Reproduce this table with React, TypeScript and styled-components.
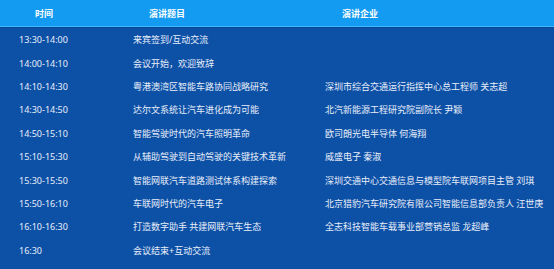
import React from 'react';
import styled, { createGlobalStyle } from 'styled-components';

const GlobalStyle = createGlobalStyle`
  html, body {
    margin: 0;
    padding: 0;
    background: #0d51a7;
  }
  body {
    font-family: "Noto Sans", "Noto Sans CJK SC", sans-serif;
  }
`;

const Schedule = styled.div`
  width: 554px;
  height: 269px;
  background: #0d51a7;
  overflow: hidden;
`;

const HeaderRow = styled.div`
  display: flex;
  height: 26px;
  background: #129bf0;
  border-bottom: 1px solid #3bb8ff;
  box-shadow: 0 1px 0 #0b4894;
`;

const HeadCell = styled.div<{ $width: number }>`
  width: ${props => props.$width}px;
  display: flex;
  align-items: center;
  justify-content: center;
  color: #ffffff;
  font-size: 9px;
  font-weight: 700;
`;

const Body = styled.div`
  padding-top: 1px;
`;

const Row = styled.div`
  display: flex;
  height: 23.4px;
  align-items: center;
`;

const Cell = styled.div<{ $width?: number }>`
  ${props => (props.$width ? `width: ${props.$width}px;` : 'flex: 1;')}
  padding-left: 19px;
  box-sizing: border-box;
  color: #e8eef9;
  font-size: 9px;
  white-space: nowrap;
  overflow: hidden;
`;

interface Talk {
  time: string;
  title: string;
  company: string;
}

const talks: Talk[] = [
  { time: '13:30-14:00', title: '来宾签到/互动交流', company: '' },
  { time: '14:00-14:10', title: '会议开始，欢迎致辞', company: '' },
  { time: '14:10-14:30', title: '粤港澳湾区智能车路协同战略研究', company: '深圳市综合交通运行指挥中心总工程师 关志超' },
  { time: '14:30-14:50', title: '达尔文系统让汽车进化成为可能', company: '北汽新能源工程研究院副院长 尹颖' },
  { time: '14:50-15:10', title: '智能驾驶时代的汽车照明革命', company: '欧司朗光电半导体 何海翔' },
  { time: '15:10-15:30', title: '从辅助驾驶到自动驾驶的关键技术革新', company: '威盛电子 秦淑' },
  { time: '15:30-15:50', title: '智能网联汽车道路测试体系构建探索', company: '深圳交通中心交通信息与模型院车联网项目主管 刘琪' },
  { time: '15:50-16:10', title: '车联网时代的汽车电子', company: '北京猎豹汽车研究院有限公司智能信息部负责人 汪世庚' },
  { time: '16:10-16:30', title: '打造数字助手 共建网联汽车生态', company: '全志科技智能车载事业部营销总监 龙超峰' },
  { time: '16:30', title: '会议结束+互动交流', company: '' },
];

const App: React.FC = () => {
  return (
    <Schedule>
      <GlobalStyle />
      <HeaderRow>
        <HeadCell $width={88}>时间</HeadCell>
        <HeadCell $width={158}>演讲题目</HeadCell>
        <HeadCell $width={228}>演讲企业</HeadCell>
      </HeaderRow>
      <Body>
        {talks.map(talk => (
          <Row key={talk.time}>
            <Cell $width={114}>{talk.time}</Cell>
            <Cell $width={192}>{talk.title}</Cell>
            <Cell>{talk.company}</Cell>
          </Row>
        ))}
      </Body>
    </Schedule>
  );
};

export default App;
